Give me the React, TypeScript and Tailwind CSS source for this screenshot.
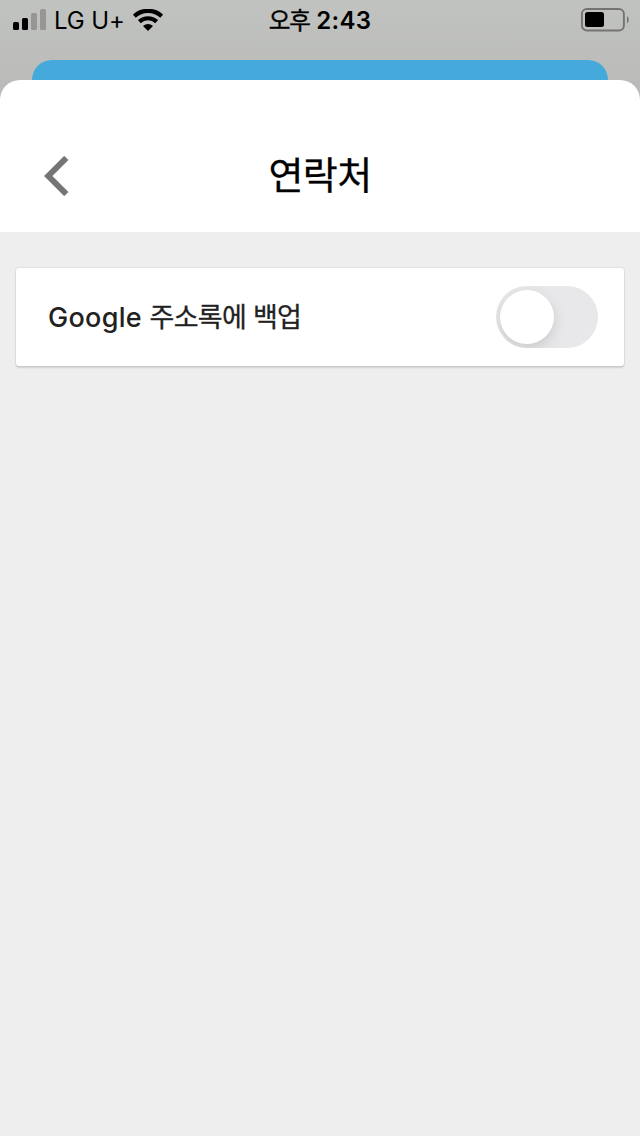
import React, { useState } from 'react';

const SignalBars: React.FC = () => (
  <svg width="34" height="22" viewBox="0 0 34 22">
    <rect x="0" y="13" width="6" height="8" rx="1.5" fill="#000" />
    <rect x="9" y="9" width="6" height="12" rx="1.5" fill="#000" />
    <rect x="18" y="4" width="6" height="17" rx="1.5" fill="#969795" />
    <rect x="27" y="0" width="6" height="21" rx="1.5" fill="#969795" />
  </svg>
);

const WifiIcon: React.FC = () => (
  <svg width="30" height="22" viewBox="0 0 30 22" fill="none" stroke="#000">
    <path d="M1.3 7.2C9 0.1 21 0.1 28.7 7.2" strokeWidth="4.4" />
    <path d="M6.3 12.6C11.2 8.1 18.8 8.1 23.7 12.6" strokeWidth="4.2" />
    <path d="M10 17C13 14.3 17 14.3 20 17L15 22Z" fill="#000" stroke="none" />
  </svg>
);

const BatteryIcon: React.FC = () => (
  <svg width="49" height="24" viewBox="0 0 49 24">
    <rect x="1.9" y="1" width="42" height="21.5" rx="5" fill="none" stroke="#747573" strokeWidth="1.9" />
    <rect x="5" y="4" width="19" height="15" rx="2.5" fill="#000" />
    <path d="M47 8C49.3 9.8 49.3 13.7 47 15.5Z" fill="#747573" />
  </svg>
);

const StatusBar: React.FC = () => (
  <div className="grid h-10 grid-cols-[1fr_auto_1fr] items-center pl-[13px] pr-[11px] text-black">
    <div className="flex items-center">
      <SignalBars />
      <span className="ml-[7px] pt-0.5 text-[24px] leading-[38px] tracking-[-0.1px]">LG U+</span>
      <span className="ml-[8.5px]">
        <WifiIcon />
      </span>
    </div>
    <div className="pr-0.5 pt-0.5 text-[24px] font-semibold leading-[38px] tracking-[0.3px]">
      <span className="text-[23.5px] font-normal tracking-[-1px] [-webkit-text-stroke:0.4px_#000]">오후</span> 2:43
    </div>
    <div className="flex justify-end">
      <BatteryIcon />
    </div>
  </div>
);

const App: React.FC = () => {
  const [backup, setBackup] = useState(false);

  return (
    <div className="flex h-[1136px] w-[640px] flex-col overflow-hidden bg-linear-to-b from-[#c1c3c0] to-[#b9bab7] to-[100px] font-['Inter','Noto_Sans_CJK_KR',sans-serif]">
      <StatusBar />
      <div className="mx-8 mt-5 h-5 shrink-0 rounded-t-[20px] bg-[#45aadb]" />

      <div className="flex flex-1 flex-col overflow-hidden rounded-t-[20px] bg-white">
        <header className="grid h-[152px] shrink-0 grid-cols-[1fr_auto_1fr] items-center pl-11 pr-11 pt-10">
          <button type="button" aria-label="Back" className="w-6">
            <svg width="25" height="40" viewBox="0 0 25 40" fill="none" stroke="#757575" strokeWidth="6">
              <path d="M22.3 2L4.3 20L22.3 38" />
            </svg>
          </button>
          <h1 className="-mt-0.5 text-[38px] font-normal leading-[56px] tracking-[-0.6px] text-black [-webkit-text-stroke:0.3px_#000]">
            연락처
          </h1>
          <span />
        </header>

        <main className="flex-1 bg-[#eeeeee] px-4 pt-9">
          <div className="flex h-[98px] items-center justify-between rounded-[3px] bg-white pl-8 pr-[26px] shadow-[0_0_1px_1px_rgba(0,0,0,0.05),0_2px_2px_rgba(0,0,0,0.12)]">
            <span className="pt-0.5 text-[27px] font-medium tracking-[0.3px] text-[#212121]">
              Google{' '}
              <span className="font-normal tracking-[-0.7px] [-webkit-text-stroke:0.3px_#212121]">주소록에 백업</span>
            </span>
            <button
              type="button"
              role="switch"
              aria-checked={backup}
              aria-label="Google 주소록에 백업"
              onClick={() => setBackup(!backup)}
              className={`flex h-[62px] w-[102px] items-center overflow-hidden rounded-full p-1 ${
                backup ? 'justify-end bg-[#34c759]' : 'bg-[#e8e8ea]'
              }`}
            >
              <span className="size-[54px] rounded-full bg-white shadow-[0_5px_14px_rgba(0,0,0,0.13)]" />
            </button>
          </div>
        </main>
      </div>
    </div>
  );
};

export default App;
